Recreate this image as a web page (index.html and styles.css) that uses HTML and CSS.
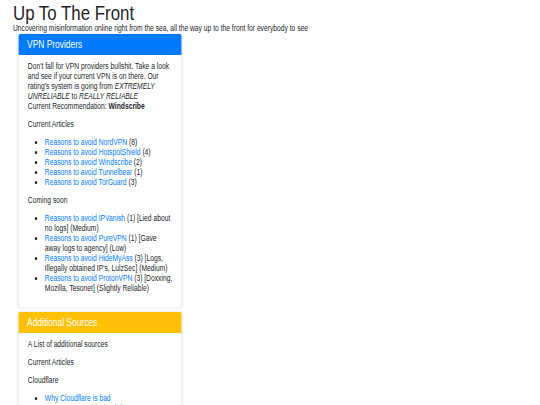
FILE: index.html
```html
<!DOCTYPE html>
<html lang="en">
<head>
<meta charset="utf-8">
<title>Up To The Front</title>
<link rel="stylesheet" href="styles.css">
</head>
<body>
<div class="page">
<header class="site-head">
  <h1 class="title">Up To The Front</h1>
  <p class="tagline">Uncovering misinformation online right from the sea, all the way up to the front for everybody to see</p>
</header>
<main class="cards">
  <section class="card">
    <div class="card-head blue">VPN Providers</div>
    <div class="card-body">
      <p>Don't fall for VPN providers bullshit. Take a look and see if your current VPN is on there. Our rating's system is going from <em>EXTREMELY UNRELIABLE</em> to <em>REALLY RELIABLE</em><br>Current Recommendation: <strong>Windscribe</strong></p>
      <p>Current Articles</p>
      <ul>
        <li><a href="#">Reasons to avoid NordVPN</a> (8)</li>
        <li><a href="#">Reasons to avoid HotspotShield</a> (4)</li>
        <li><a href="#">Reasons to avoid Windscribe</a> (2)</li>
        <li><a href="#">Reasons to avoid Tunnelbear</a> (1)</li>
        <li><a href="#">Reasons to avoid TorGuard</a> (3)</li>
      </ul>
      <p>Coming soon</p>
      <ul>
        <li><a href="#">Reasons to avoid IPVanish</a> (1) [Lied about no logs] (Medium)</li>
        <li><a href="#">Reasons to avoid PureVPN</a> (1) [Gave away logs to agency] (Low)</li>
        <li><a href="#">Reasons to avoid HideMyAss</a> (3) [Logs, Illegally obtained IP's, LulzSec] (Medium)</li>
        <li><a href="#">Reasons to avoid ProtonVPN</a> (3) [Doxxing, Mozilla, Tesonet] (Slightly Reliable)</li>
      </ul>
    </div>
  </section>
  <section class="card">
    <div class="card-head yellow">Additional Sources</div>
    <div class="card-body">
      <p>A List of additional sources</p>
      <p>Current Articles</p>
      <p>Cloudflare</p>
      <ul>
        <li><a href="#">Why Cloudflare is bad</a></li>
        <li><a href="#">Reasons to avoid CloudFlare</a></li>
      </ul>
    </div>
  </section>
</main>
</div>
</body>
</html>
```
FILE: styles.css
```css
html, body {
  margin: 0;
  padding: 0;
  background: #ffffff;
  overflow: hidden;
}
body {
  font-family: "Liberation Sans", Arial, sans-serif;
  color: #212529;
  font-size: 8.3px;
  line-height: 10px;
}
/* the reference is horizontally compressed; narrow the whole page */
.page {
  padding: 1px 0 0 16px;
  transform: scaleX(0.81);
  transform-origin: 0 0;
}
.title {
  margin: 0;
  font-size: 20.8px;
  line-height: 23px;
  font-weight: normal;
  color: #212529;
}
.tagline {
  margin: 0;
  font-size: 8.3px;
  line-height: 9px;
  white-space: nowrap;
}
.cards {
  display: flex;
  flex-direction: column;
  gap: 5px;
  margin: 1px 0 0 7.4px;
  width: 201px;
}
.card {
  background: #fff;
  border-radius: 2px;
  box-shadow: 0 0 3px rgba(0, 0, 0, 0.16);
}
.card-head {
  height: 21px;
  line-height: 21px;
  padding: 0 10px;
  font-size: 10.4px;
  color: #fff;
  border-radius: 2px 2px 0 0;
}
.blue { background: #007bff; }
.yellow { background: #ffc107; }
.card-body {
  padding: 6px 11px;
}
.card-body p {
  margin: 0 0 8px;
}
.card-body ul {
  margin: 0 0 8px;
  padding-left: 21px;
}
.card-body a {
  color: #007bff;
  text-decoration: none;
}
```
